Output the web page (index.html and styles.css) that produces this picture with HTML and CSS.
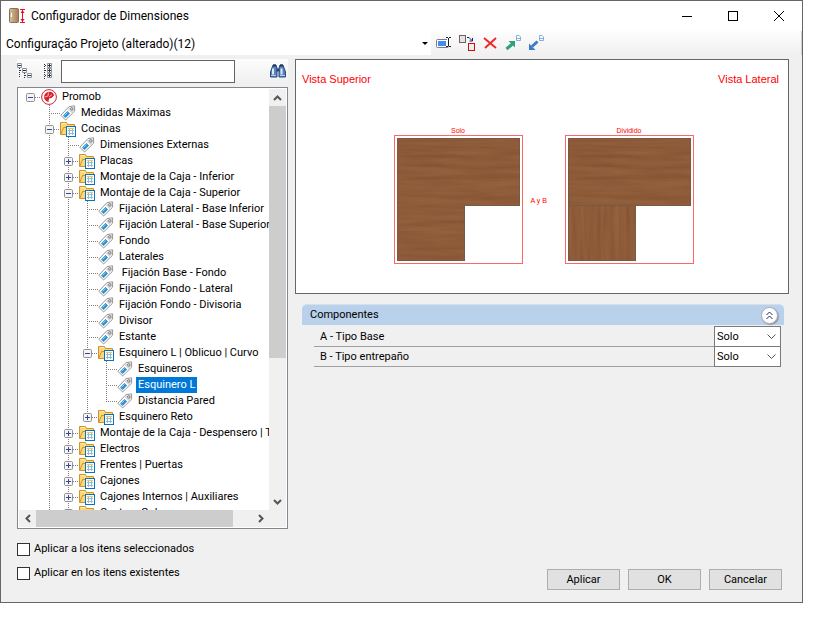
FILE: index.html
```html
<!DOCTYPE html>
<html lang="es">
<head>
  <meta charset="UTF-8" />
  <meta name="viewport" content="width=device-width, initial-scale=1" />
  <title>Configurador de Dimensiones</title>
  <link rel="stylesheet" href="styles.css">
</head>
<body>
  <!-- shared icons -->
  <svg class="defs" aria-hidden="true">
    <symbol id="tag" viewBox="0 0 16 16">
      <path d="M.8 10.2 9 1.6 14.6.8v5.4L5.600 15z" fill="#fff" stroke="#969696" />
      <path d="M9.400 2.400 13.800 1.600v4.200L11.500 8 7.800 4.300z" fill="#d6d6d6" />
      <path d="M3 10.500 7.500 6 10 8.500 5.500 13z" fill="#2a8fd0" />
      <path d="M4.500 10.500 7.500 7.500" stroke="#9bd2f2" />
      <circle cx="11.800" cy="3.900" r="1.200" fill="#fff" stroke="#777" />
    </symbol>
    <symbol id="folder" viewBox="0 0 16 16">
      <path d="M.5 13.5V1.5h6l1 2h7v10z" fill="#fbd877" stroke="#d3912a" />
      <path d="M1 13 3.500 6.500H15" fill="none" stroke="#d3912a" />
      <path d="M2 2.500h4" stroke="#fff0bd" />
      <rect x="6.5" y="5.5" width="9" height="10" fill="#fff" stroke="#0b74b8" />
      <path d="M8 9.500h6M8 12.500h6M9.500 7v7M12.500 7v7" stroke="#8bbde0" fill="none" />
      <path d="M8 7.500h6" stroke="#f0c35a" />
    </symbol>
    <symbol id="plus" viewBox="0 0 9 9">
      <rect x=".5" y=".5" width="8" height="8" rx="1" fill="#f4f4f4" stroke="#919191" />
      <path d="M2 4.500h5M4.500 2v5" stroke="#33489b" />
    </symbol>
    <symbol id="minus" viewBox="0 0 9 9">
      <rect x=".5" y=".5" width="8" height="8" rx="1" fill="#f4f4f4" stroke="#919191" />
      <path d="M2 4.500h5" stroke="#33489b" />
    </symbol>
    <filter id="grain-h" x="0" y="0" width="1" height="1">
      <feTurbulence type="fractalNoise" baseFrequency=".015 .2" numOctaves="3" seed="4" />
      <feColorMatrix values=".14 0 0 0 .455  .12 0 0 0 .27  .1 0 0 0 .15  0 0 0 0 1" color-interpolation-filters="sRGB" />
    </filter>
    <filter id="grain-v" x="0" y="0" width="1" height="1">
      <feTurbulence type="fractalNoise" baseFrequency=".2 .015" numOctaves="3" seed="7" />
      <feColorMatrix values=".14 0 0 0 .455  .12 0 0 0 .27  .1 0 0 0 .15  0 0 0 0 1" color-interpolation-filters="sRGB" />
    </filter>
  </svg>

  <div class="window">
    <header class="titlebar">
      <svg class="app-icon" width="17" height="16" viewBox="0 0 17 16">
        <defs>
          <linearGradient id="door" x2="1"><stop stop-color="#d9c19a" /><stop offset="1" stop-color="#9f7f58" /></linearGradient>
        </defs>
        <rect x=".5" y=".5" width="9" height="14" rx="1" fill="url(#door)" stroke="#8a7152" />
        <path d="M2.500 5v4" stroke="#fff" />
        <path d="M11 1.500h5M11 14.500h5M13.500 2v12" stroke="#e0122a" />
        <path d="M13.500 2 11.500 5h4zM13.500 14l-2-3h4z" fill="#e0122a" />
      </svg>
      <h1>Configurador de Dimensiones</h1>
      <div class="window-buttons">
        <button type="button" aria-label="Minimizar"><svg width="10" height="10"><path d="M0 5.500h10" stroke="#000" /></svg></button>
        <button type="button" aria-label="Maximizar"><svg width="10" height="10"><rect x=".5" y=".5" width="9" height="9" fill="none" stroke="#000" /></svg></button>
        <button type="button" aria-label="Cerrar"><svg width="10" height="10"><path d="M0 0 10 10M10 0 0 10" stroke="#000" /></svg></button>
      </div>
    </header>

    <div class="toolbar">
      <select class="project" aria-label="Configuração">
        <option>Configuração Projeto (alterado)(12)</option>
      </select>
      <div class="tools">
        <button type="button" aria-label="Renombrar">
          <svg width="16" height="16" viewBox="0 0 16 16">
            <rect x=".5" y="4.5" width="12" height="8" rx="1" fill="#fff" stroke="#6f7f95" />
            <rect x="2" y="6" width="8" height="5" fill="#4a8ae8" />
            <path d="M12.500 3v8" stroke="#fff" stroke-width="3" />
            <path d="M10 2.500h2M13 2.500h2M10 11.500h2M13 11.500h2M12.500 3v8" fill="none" stroke="#222" />
          </svg>
        </button>
        <button type="button" aria-label="Duplicar">
          <svg width="16" height="16" viewBox="0 0 16 16">
            <rect x=".5" y=".5" width="6" height="7" fill="#e6e2e2" stroke="#6d6264" />
            <path d="M8 2.500h2l3 3M13.500 3v3h-3" fill="none" stroke="#15206e" />
            <rect x="9.500" y="8.500" width="6" height="7" fill="#eee" stroke="#d60c0c" />
          </svg>
        </button>
        <button type="button" aria-label="Eliminar">
          <svg width="16" height="16" viewBox="0 0 16 16">
            <path d="M2 3 14 13M14 3 3 13" stroke="#ee2a2a" stroke-width="2" />
          </svg>
        </button>
        <button type="button" aria-label="Exportar">
          <svg width="16" height="16" viewBox="0 0 16 16">
            <path d="M1.500 14 8 8.500" stroke="#2ea277" stroke-width="3" />
            <path d="M3.500 6H10v6.500z" fill="#2ea277" />
            <path d="M11.500.5h2.500l1.500 1.500v3.500h-4z" fill="#fff" stroke="#86aed4" />
            <path d="M12 3.500h3" stroke="#86aed4" />
          </svg>
        </button>
        <button type="button" aria-label="Importar">
          <svg width="16" height="16" viewBox="0 0 16 16">
            <path d="M4 11.500 9.500 6.500" stroke="#3c7cc6" stroke-width="3" />
            <path d="M1 8.500V15h6.500z" fill="#3c7cc6" />
            <path d="M11.500.5h2.500l1.500 1.500v3.500h-4z" fill="#fff" stroke="#86aed4" />
            <path d="M12 3.500h3" stroke="#86aed4" />
          </svg>
        </button>
      </div>
    </div>

    <main class="content">
      <section class="sidebar">
        <div class="search">
          <button type="button" aria-label="Contraer todo">
            <svg width="16" height="16" viewBox="0 0 16 16">
              <path d="M2.500 5v10M7.500 10v5M3 7.500h2M8 12.500h2" stroke="#333" stroke-dasharray="1 1" />
              <path d="M.5 .5h4v4h-4zM5.500 5.500h4v4h-4zM10.500 10.500h4v4h-4z" fill="#fff" stroke="#8a93a0" />
              <path d="M1 2.500h3M6 7.500h3M11 12.500h3" stroke="#333" />
            </svg>
          </button>
          <button type="button" aria-label="Expandir todo">
            <svg width="16" height="16" viewBox="0 0 16 16">
              <path d="M5.500 1v15M6 2.500h3M6 7.500h3M6 12.500h3" stroke="#333" stroke-dasharray="1 1" />
              <path d="M8.500 .5h4v4h-4zM8.500 5.500h4v4h-4zM8.500 10.500h4v4h-4z" fill="#fff" stroke="#8a93a0" />
              <path d="M9 2.500h3M10.500 1v3M9 7.500h3M10.500 6v3M9 12.500h3M10.500 11v3" stroke="#333" />
            </svg>
          </button>
          <input type="text" aria-label="Buscar">
          <button type="button" class="find" aria-label="Buscar">
            <svg width="16" height="14" viewBox="0 0 16 14">
              <path d="M3 1h3l1 3v9H.5V8zM13 1h-3L9 4v9h6.500V8z" fill="#5b82bb" stroke="#254a80" />
              <path d="M6.500 4.500h3v3h-3z" fill="#254a80" />
              <path d="M3 4.500v6M11.500 4.500v6" stroke="#dbe8f7" stroke-width="2" />
              <path d="M1 11.500h5M10 11.500h5" stroke="#b4cdea" />
              <path d="M3 1.500h3M10 1.500h3" stroke="#1c3761" stroke-width="2" />
            </svg>
          </button>
        </div>

        <div class="tree">
          <div class="tree-view">
            <ul class="root">
              <li>
                <div class="node">
                  <button type="button" class="toggle" aria-label="Contraer"><svg width="9" height="9"><use href="#minus" /></svg></button>
                  <svg width="16" height="16" viewBox="0 0 16 16">
                    <circle cx="8" cy="8" r="7.400" fill="#fff" stroke="#d4232f" />
                    <path d="M7 3c3-1 6 1 6 3.500L10.500 9 8 9.500 7.500 13C4.500 12.500 3 10 3 8s1.500-4.500 4-5z" fill="#d4232f" />
                    <path d="M7.500 3.500 7 7 3.500 8M8 8l3-2.500" stroke="#f5b4b8" fill="none" />
                  </svg>
                  <span>Promob</span>
                </div>
                <ul>
                  <li><div class="node leaf"><svg width="16" height="16"><use href="#tag" /></svg><span>Medidas Máximas</span></div></li>
                  <li class="open">
                    <div class="node"><button type="button" class="toggle" aria-label="Contraer"><svg width="9" height="9"><use href="#minus" /></svg></button><svg width="16" height="16"><use href="#folder" /></svg><span>Cocinas</span></div>
                    <ul>
                      <li><div class="node leaf"><svg width="16" height="16"><use href="#tag" /></svg><span>Dimensiones Externas</span></div></li>
                      <li><div class="node"><button type="button" class="toggle" aria-label="Expandir"><svg width="9" height="9"><use href="#plus" /></svg></button><svg width="16" height="16"><use href="#folder" /></svg><span>Placas</span></div></li>
                      <li><div class="node"><button type="button" class="toggle" aria-label="Expandir"><svg width="9" height="9"><use href="#plus" /></svg></button><svg width="16" height="16"><use href="#folder" /></svg><span>Montaje de la Caja - Inferior</span></div></li>
                      <li>
                        <div class="node"><button type="button" class="toggle" aria-label="Contraer"><svg width="9" height="9"><use href="#minus" /></svg></button><svg width="16" height="16"><use href="#folder" /></svg><span>Montaje de la Caja - Superior</span></div>
                        <ul>
                          <li><div class="node leaf"><svg width="16" height="16"><use href="#tag" /></svg><span>Fijación Lateral - Base Inferior</span></div></li>
                          <li><div class="node leaf"><svg width="16" height="16"><use href="#tag" /></svg><span>Fijación Lateral - Base Superior</span></div></li>
                          <li><div class="node leaf"><svg width="16" height="16"><use href="#tag" /></svg><span>Fondo</span></div></li>
                          <li><div class="node leaf"><svg width="16" height="16"><use href="#tag" /></svg><span>Laterales</span></div></li>
                          <li><div class="node leaf"><svg width="16" height="16"><use href="#tag" /></svg><span>&nbsp;Fijación Base - Fondo</span></div></li>
                          <li><div class="node leaf"><svg width="16" height="16"><use href="#tag" /></svg><span>Fijación Fondo - Lateral</span></div></li>
                          <li><div class="node leaf"><svg width="16" height="16"><use href="#tag" /></svg><span>Fijación Fondo - Divisoria</span></div></li>
                          <li><div class="node leaf"><svg width="16" height="16"><use href="#tag" /></svg><span>Divisor</span></div></li>
                          <li><div class="node leaf"><svg width="16" height="16"><use href="#tag" /></svg><span>Estante</span></div></li>
                          <li>
                            <div class="node"><button type="button" class="toggle" aria-label="Contraer"><svg width="9" height="9"><use href="#minus" /></svg></button><svg width="16" height="16"><use href="#folder" /></svg><span>Esquinero L | Oblicuo | Curvo</span></div>
                            <ul>
                              <li><div class="node leaf"><svg width="16" height="16"><use href="#tag" /></svg><span>Esquineros</span></div></li>
                              <li><div class="node leaf selected"><svg width="16" height="16"><use href="#tag" /></svg><span>Esquinero L</span></div></li>
                              <li><div class="node leaf"><svg width="16" height="16"><use href="#tag" /></svg><span>Distancia Pared</span></div></li>
                            </ul>
                          </li>
                          <li><div class="node"><button type="button" class="toggle" aria-label="Expandir"><svg width="9" height="9"><use href="#plus" /></svg></button><svg width="16" height="16"><use href="#folder" /></svg><span>Esquinero Reto</span></div></li>
                        </ul>
                      </li>
                      <li><div class="node"><button type="button" class="toggle" aria-label="Expandir"><svg width="9" height="9"><use href="#plus" /></svg></button><svg width="16" height="16"><use href="#folder" /></svg><span>Montaje de la Caja - Despensero | Torre</span></div></li>
                      <li><div class="node"><button type="button" class="toggle" aria-label="Expandir"><svg width="9" height="9"><use href="#plus" /></svg></button><svg width="16" height="16"><use href="#folder" /></svg><span>Electros</span></div></li>
                      <li><div class="node"><button type="button" class="toggle" aria-label="Expandir"><svg width="9" height="9"><use href="#plus" /></svg></button><svg width="16" height="16"><use href="#folder" /></svg><span>Frentes | Puertas</span></div></li>
                      <li><div class="node"><button type="button" class="toggle" aria-label="Expandir"><svg width="9" height="9"><use href="#plus" /></svg></button><svg width="16" height="16"><use href="#folder" /></svg><span>Cajones</span></div></li>
                      <li><div class="node"><button type="button" class="toggle" aria-label="Expandir"><svg width="9" height="9"><use href="#plus" /></svg></button><svg width="16" height="16"><use href="#folder" /></svg><span>Cajones Internos | Auxiliares</span></div></li>
                      <li class="more"><div class="node"><button type="button" class="toggle" aria-label="Expandir"><svg width="9" height="9"><use href="#plus" /></svg></button><svg width="16" height="16"><use href="#folder" /></svg><span>Costura Gola</span></div></li>
                    </ul>
                  </li>
                </ul>
              </li>
            </ul>
          </div>
          <div class="scroll scroll-v">
            <button type="button" aria-label="Arriba"><svg width="9" height="6"><path d="M1 5 4.500 1.500 8 5" /></svg></button>
            <div class="track"><div class="thumb"></div></div>
            <button type="button" aria-label="Abajo"><svg width="9" height="6"><path d="M1 1 4.500 4.500 8 1" /></svg></button>
          </div>
          <div class="scroll scroll-h">
            <button type="button" aria-label="Izquierda"><svg width="6" height="9"><path d="M5 1 1.500 4.500 5 8" /></svg></button>
            <div class="track"><div class="thumb"></div></div>
            <button type="button" aria-label="Derecha"><svg width="6" height="9"><path d="M1 1 4.500 4.500 1 8" /></svg></button>
          </div>
        </div>

        <div class="options">
          <label><input type="checkbox"> Aplicar a los itens seleccionados</label>
          <label><input type="checkbox"> Aplicar en los itens existentes</label>
        </div>
      </section>

      <section class="details">
        <div class="preview">
          <div class="views"><span>Vista Superior</span><span>Vista Lateral</span></div>
          <div class="drawings">
            <figure>
              <figcaption>Solo</figcaption>
              <svg width="129" height="129" viewBox="0 0 129 129">
                <clipPath id="corner"><path d="M3 3h123v68H71v55H3z" /></clipPath>
                <rect x=".5" y=".5" width="128" height="128" fill="#fff" stroke="#f66" />
                <g clip-path="url(#corner)"><rect x="3" y="3" width="123" height="123" filter="url(#grain-h)" /></g>
                <path d="M3.500 3.500h122v67h-55v55h-67z" fill="none" stroke="#6e5a4c" stroke-opacity=".7" />
              </svg>
            </figure>
            <span class="between">A y B</span>
            <figure>
              <figcaption>Dividido</figcaption>
              <svg width="129" height="129" viewBox="0 0 129 129">
                <rect x=".5" y=".5" width="128" height="128" fill="#fff" stroke="#f66" />
                <rect x="3" y="3" width="123" height="68" filter="url(#grain-h)" />
                <rect x="3" y="71" width="68" height="55" filter="url(#grain-v)" />
                <path d="M3.500 3.500h122v67h-55v55h-67zM3.500 70.500h67" fill="none" stroke="#6e5a4c" stroke-opacity=".7" />
              </svg>
            </figure>
          </div>
        </div>

        <div class="group">
          <div class="group-head">
            <h2>Componentes</h2>
            <button type="button" aria-label="Contraer">
              <svg width="9" height="9" viewBox="0 0 9 9"><path d="M1.500 4 4.500 1l3 3M1.500 8l3-3 3 3" /></svg>
            </button>
          </div>
          <div class="field">
            <label for="base">A - Tipo Base</label>
            <select id="base"><option>Solo</option></select>
          </div>
          <div class="field">
            <label for="shelf">B - Tipo entrepaño</label>
            <select id="shelf"><option>Solo</option></select>
          </div>
        </div>

        <div class="actions">
          <button type="button">Aplicar</button>
          <button type="button">OK</button>
          <button type="button">Cancelar</button>
        </div>
      </section>
    </main>
  </div>
</body>
</html>
```

FILE: styles.css
```css
* {
  box-sizing: border-box;
}

body {
  margin: 0;
  padding: 0 14px 15px 0;
  height: 100vh;
  background: #fff;
  color: #000;
  font-family: Roboto, "Liberation Sans", sans-serif;
  font-size: 11px;
  line-height: 16px;
}

button, input, select {
  font: inherit;
  color: inherit;
  margin: 0;
  padding: 0;
}

button {
  border: 0;
  background: none;
}

svg {
  display: block;
  flex: none;
}

h1, h2, ul, figure {
  margin: 0;
  padding: 0;
  font-size: inherit;
  font-weight: normal;
}

.defs {
  position: absolute;
  width: 0;
  height: 0;
}

.window {
  display: flex;
  flex-direction: column;
  height: 100%;
  border: 1px solid #666;
  background: #f0f0f0;
}

/* title bar */
.titlebar {
  display: flex;
  align-items: center;
  height: 30px;
  padding-left: 8px;
  background: #fff;
  font-size: 12px;
}

.titlebar h1 {
  flex: 1;
  padding-left: 5px;
}

.window-buttons {
  display: flex;
}

.window-buttons button {
  display: flex;
  justify-content: center;
  width: 46px;
}

/* toolbar */
.toolbar {
  display: flex;
  height: 24px;
  background: linear-gradient(#fdfdfd, #f0f0f0);
}

.project {
  appearance: none;
  width: 430px;
  padding: 2px 0 0 5px;
  border: 0;
  background: #fff url("data:image/svg+xml,%3Csvg xmlns='http://www.w3.org/2000/svg' width='6' height='3'%3E%3Cpath d='M0 0h6L3 3z'/%3E%3C/svg%3E") no-repeat right 3px center;
  font-size: 12px;
}

.tools {
  display: flex;
  align-items: center;
  flex: 1;
  gap: 7px;
  padding-left: 5px;
  border-right: 1px solid #d0d0d0;
}

/* main area */
.content {
  display: flex;
  flex: 1;
  min-height: 0;
  gap: 7px;
  padding: 4px 13px 12px 16px;
}

.sidebar {
  display: flex;
  flex-direction: column;
  width: 271px;
}

.search {
  display: flex;
  align-items: center;
  gap: 6px;
  height: 24px;
  margin-bottom: 4px;
  background: linear-gradient(#fcfcfc, #f0f0f0);
}

.search input {
  width: 174px;
  height: 23px;
  padding: 0 4px;
  border: 1px solid #646464;
  background: #fff;
}

.find {
  margin: 0 2px 0 auto;
}

/* tree */
.tree {
  display: grid;
  grid-template: minmax(0, 1fr) 17px / minmax(0, 1fr) 17px;
  flex: 1;
  min-height: 0;
  padding: 1px;
  border: 1px solid #828790;
  background: #f0f0f0;
  box-shadow: inset 0 0 0 1px #fff;
}

.tree-view {
  overflow: hidden;
  background: #fff;
}

.tree ul {
  list-style: none;
}

.tree .root {
  padding-left: 7px;
}

.tree ul ul {
  padding-left: 19px;
}

.tree ul ul > li {
  background: repeating-linear-gradient(#808080 0 1px, transparent 1px 2px) 4px 0 / 1px 100% no-repeat;
}

.tree ul ul > li:last-child {
  background-size: 1px 8px;
}

.tree ul ul > li.open,
.tree ul ul > li.more {
  background-size: 1px 100%;
}

.node {
  display: flex;
  align-items: center;
  height: 16px;
  white-space: nowrap;
}

.node::before {
  content: "";
  order: 1;
  flex: none;
  width: 6px;
  height: 1px;
  background: repeating-linear-gradient(90deg, #808080 0 1px, transparent 1px 2px);
}

.node.leaf::before {
  width: 11px;
  margin-left: 4px;
}

.node > svg,
.node > span {
  order: 2;
}

.node > span {
  margin-left: 3px;
  padding: 0 2px;
}

.selected > span {
  background: #0078d7;
  color: #fff;
}

/* scroll bars */
.scroll {
  display: flex;
  background: #f0f0f0;
}

.scroll button {
  display: flex;
  align-items: center;
  justify-content: center;
  width: 17px;
  height: 17px;
}

.scroll path {
  fill: none;
  stroke: #555;
  stroke-width: 2;
}

.track {
  display: flex;
  flex: 1;
}

.thumb {
  background: #cdcdcd;
}

.scroll-v,
.scroll-v .track {
  flex-direction: column;
}

.scroll-v .thumb {
  height: 65%;
}

.scroll-h .thumb {
  width: 91%;
}

/* tick boxes */
.options {
  display: flex;
  flex-direction: column;
  gap: 8px;
  padding: 12px 0 9px;
}

.options label {
  display: flex;
  align-items: center;
  gap: 4px;
}

.options input {
  appearance: none;
  width: 13px;
  height: 13px;
  border: 1px solid #333;
  background: #fff;
}

/* right side */
.details {
  display: flex;
  flex-direction: column;
  flex: 1;
  min-width: 0;
}

.preview {
  height: 235px;
  border: 1px solid #666;
  background: #fff;
  color: #f00;
  font-family: "Liberation Sans", sans-serif;
  font-size: 11px;
}

.views {
  display: flex;
  justify-content: space-between;
  padding: 11px 9px 0 6px;
}

.drawings {
  display: flex;
  justify-content: center;
  gap: 8px;
  padding: 39px 0 0 3px;
  font-size: 7px;
  line-height: 9px;
}

.drawings figcaption {
  text-align: center;
}

.between {
  width: 26px;
  padding-top: 70px;
}

.group {
  padding: 10px 5px 0 7px;
}

.group-head {
  display: flex;
  align-items: center;
  justify-content: space-between;
  height: 21px;
  margin-bottom: 2px;
  padding: 0 6px 0 8px;
  border-top: 1px solid #d3e1ef;
  border-radius: 5px 5px 0 0;
  background: #b9d1ea;
}

.group-head button {
  display: flex;
  align-items: center;
  justify-content: center;
  width: 17px;
  height: 17px;
  border: 1px solid #a9a9b5;
  border-radius: 50%;
  background: #fff;
  box-shadow: 1px 1px 1px #8d9aac;
}

.group-head path {
  fill: none;
  stroke: #1f2f6b;
}

.field {
  display: flex;
  align-items: center;
  height: 20px;
  margin: 0 3px 0 12px;
  border-bottom: 1px solid #a0a0a0;
}

.field label {
  flex: 1;
  padding-left: 6px;
}

.field select {
  appearance: none;
  width: 67px;
  height: 21px;
  padding-left: 2px;
  border: 1px solid #7a7a7a;
  border-radius: 0;
  background: #fff url("data:image/svg+xml,%3Csvg xmlns='http://www.w3.org/2000/svg' width='9' height='6'%3E%3Cpath d='M.5 .5 4.500 4.500 8.500 .5' fill='none' stroke='%23555'/%3E%3C/svg%3E") no-repeat right 4px center;
}

.actions {
  display: flex;
  justify-content: flex-end;
  gap: 8px;
  margin-top: auto;
  padding-right: 7px;
}

.actions button {
  width: 73px;
  height: 21px;
  border: 1px solid #adadad;
  background: #e1e1e1;
}
```
